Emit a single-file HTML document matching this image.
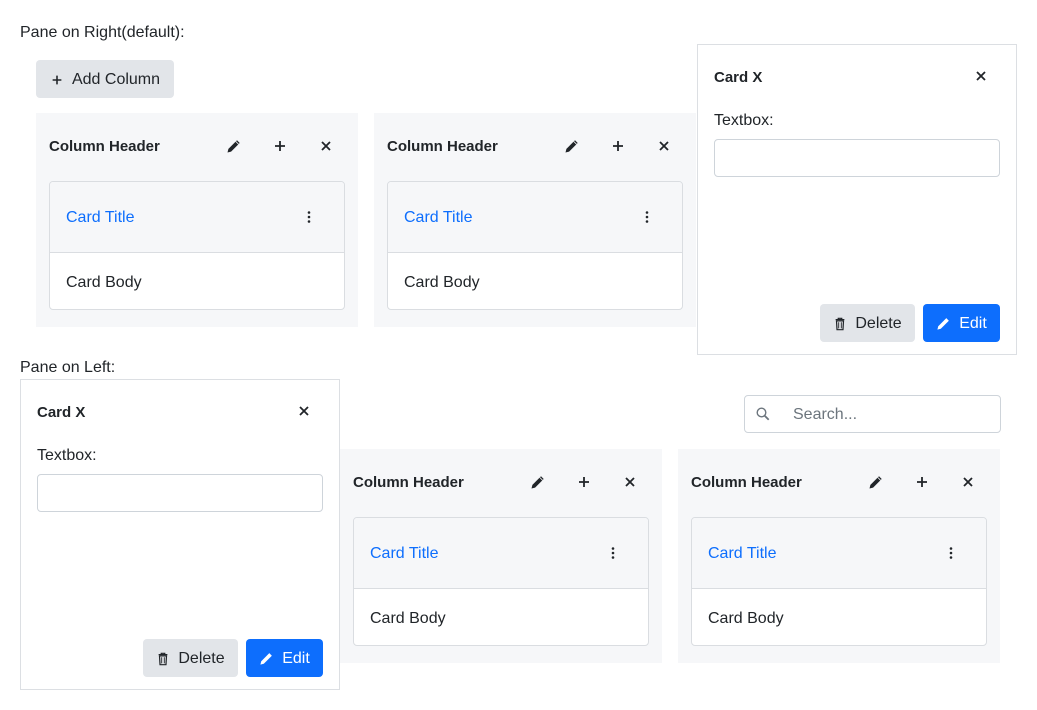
<!DOCTYPE html>
<html><head><meta charset="utf-8"><style>
*{box-sizing:border-box;margin:0;padding:0}
body{width:1037px;height:710px;background:#fff;font-family:"Liberation Sans",sans-serif;color:#212529;position:relative;overflow:hidden;font-size:16px}
.abs{position:absolute}
.lbl{font-size:16px}
.btn{position:absolute;border-radius:4px;display:flex;align-items:center;justify-content:center;font-size:16px;gap:8px;padding-top:1px}
.gray{background:#e2e5e9;color:#212529}
.blue{background:#0d6efd;color:#fff}
.col{position:absolute;width:322px;height:214px;background:#f6f7f9}
.col .h{position:absolute;left:13px;top:25px;font-weight:bold;font-size:15px}
.col .ic{position:absolute;top:25px;width:16px;height:16px}
.card{position:absolute;left:13px;top:68px;width:296px;height:129px;border:1px solid #dadde1;border-radius:4px;background:#fff;overflow:hidden}
.card .t{height:71px;background:#f6f7f9;border-bottom:1px solid #dadde1;position:relative}
.card .t span{position:absolute;left:16px;top:27px;color:#0d6efd}
.card .dots{position:absolute;left:251px;top:27px}
.card .b{padding:21px 16px}
.pane{position:absolute;width:320px;height:311px;border:1px solid #dcdfe3;background:#fff}
.pane .tt{position:absolute;left:16px;top:24px;font-weight:bold;font-size:15px}
.pane .x{position:absolute;left:275px;top:23px}
.pane .tb{position:absolute;left:16px;top:67px}
.pane .in{position:absolute;left:16px;top:94px;width:286px;height:38px;border:1px solid #ced4da;border-radius:4px}
</style></head><body>
<svg width="0" height="0" style="position:absolute">
<defs>
<symbol id="pen" viewBox="0 0 16 16"><path d="M1.5 14.5l0.9-3.6 8.6-8.6 2.7 2.7-8.6 8.6z" fill="#212529"/><path d="M9.8 3.5l2.7 2.7" stroke="#f6f7f9" stroke-width="0.8"/></symbol>
<symbol id="plus" viewBox="0 0 16 16"><path d="M8 3v10M3 8h10" stroke="#212529" stroke-width="1.8"/></symbol>
<symbol id="x" viewBox="0 0 16 16"><path d="M4 4l8 8M12 4l-8 8" stroke="#212529" stroke-width="1.8"/></symbol>
<symbol id="dots" viewBox="0 0 16 16"><circle cx="8" cy="3.5" r="1.3" fill="#212529"/><circle cx="8" cy="8" r="1.3" fill="#212529"/><circle cx="8" cy="12.5" r="1.3" fill="#212529"/></symbol>
</defs></svg>

<div class="abs lbl" style="left:20px;top:24px">Pane on Right(default):</div>
<div class="btn gray" style="left:36px;top:60px;width:138px;height:38px"><svg width="14" height="14" viewBox="0 0 16 16"><use href="#plus"/></svg>Add Column</div>

<div class="col" style="left:36px;top:113px">
<div class="h">Column Header</div>
<svg class="ic" style="left:190px"><use href="#pen"/></svg>
<svg class="ic" style="left:236px"><use href="#plus"/></svg>
<svg class="ic" style="left:282px"><use href="#x"/></svg>
<div class="card"><div class="t"><span>Card Title</span><svg class="dots" width="16" height="16"><use href="#dots"/></svg></div><div class="b">Card Body</div></div>
</div>
<div class="col" style="left:374px;top:113px">
<div class="h">Column Header</div>
<svg class="ic" style="left:190px"><use href="#pen"/></svg>
<svg class="ic" style="left:236px"><use href="#plus"/></svg>
<svg class="ic" style="left:282px"><use href="#x"/></svg>
<div class="card"><div class="t"><span>Card Title</span><svg class="dots" width="16" height="16"><use href="#dots"/></svg></div><div class="b">Card Body</div></div>
</div>

<div class="pane" style="left:697px;top:44px">
<div class="tt">Card X</div>
<svg class="x" width="16" height="16"><use href="#x"/></svg>
<div class="tb">Textbox:</div>
<div class="in"></div>
<div class="btn gray" style="left:122px;top:259px;width:95px;height:38px"><svg width="14" height="14" viewBox="0 0 16 16"><path d="M3 3h10M6 3V1.5h4V3M4 4.5h8l-0.6 10H4.6z" fill="none" stroke="#212529" stroke-width="1.4"/><path d="M6.5 6v7M9.5 6v7" stroke="#212529" stroke-width="1"/></svg>Delete</div>
<div class="btn blue" style="left:225px;top:259px;width:77px;height:38px"><svg width="15" height="15" viewBox="0 0 16 16"><path d="M1.5 14.5l0.9-3.6 8.6-8.6 2.7 2.7-8.6 8.6z" fill="#fff"/></svg>Edit</div>
</div>

<div class="abs lbl" style="left:20px;top:359px">Pane on Left:</div>

<div class="abs" style="left:744px;top:395px;width:257px;height:38px;border:1px solid #ced4da;border-radius:4px">
<svg class="abs" style="left:10px;top:10px" width="16" height="16" viewBox="0 0 16 16"><circle cx="6.5" cy="6.5" r="4.3" fill="none" stroke="#6c757d" stroke-width="1.4"/><path d="M9.7 9.7l4 4" stroke="#6c757d" stroke-width="1.8"/></svg>
<span class="abs" style="left:48px;top:10px;color:#6c757d">Search...</span>
</div>

<div class="col" style="left:340px;top:449px">
<div class="h">Column Header</div>
<svg class="ic" style="left:190px"><use href="#pen"/></svg>
<svg class="ic" style="left:236px"><use href="#plus"/></svg>
<svg class="ic" style="left:282px"><use href="#x"/></svg>
<div class="card"><div class="t"><span>Card Title</span><svg class="dots" width="16" height="16"><use href="#dots"/></svg></div><div class="b">Card Body</div></div>
</div>
<div class="col" style="left:678px;top:449px">
<div class="h">Column Header</div>
<svg class="ic" style="left:190px"><use href="#pen"/></svg>
<svg class="ic" style="left:236px"><use href="#plus"/></svg>
<svg class="ic" style="left:282px"><use href="#x"/></svg>
<div class="card"><div class="t"><span>Card Title</span><svg class="dots" width="16" height="16"><use href="#dots"/></svg></div><div class="b">Card Body</div></div>
</div>

<div class="pane" style="left:20px;top:379px">
<div class="tt">Card X</div>
<svg class="x" width="16" height="16"><use href="#x"/></svg>
<div class="tb">Textbox:</div>
<div class="in"></div>
<div class="btn gray" style="left:122px;top:259px;width:95px;height:38px"><svg width="14" height="14" viewBox="0 0 16 16"><path d="M3 3h10M6 3V1.5h4V3M4 4.5h8l-0.6 10H4.6z" fill="none" stroke="#212529" stroke-width="1.4"/><path d="M6.5 6v7M9.5 6v7" stroke="#212529" stroke-width="1"/></svg>Delete</div>
<div class="btn blue" style="left:225px;top:259px;width:77px;height:38px"><svg width="15" height="15" viewBox="0 0 16 16"><path d="M1.5 14.5l0.9-3.6 8.6-8.6 2.7 2.7-8.6 8.6z" fill="#fff"/></svg>Edit</div>
</div>
</body></html>
